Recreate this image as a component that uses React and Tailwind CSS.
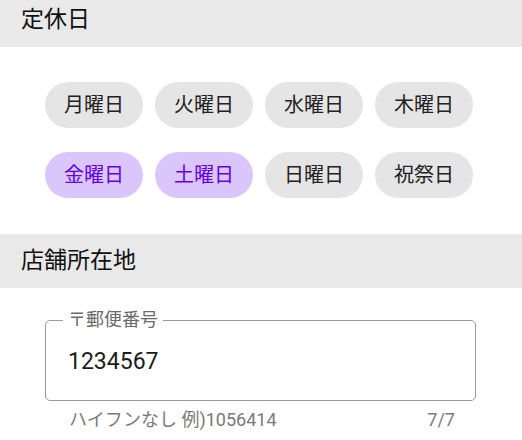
import React from "react";

const days = [
  { t: "月曜日", on: false },
  { t: "火曜日", on: false },
  { t: "水曜日", on: false },
  { t: "木曜日", on: false },
  { t: "金曜日", on: true },
  { t: "土曜日", on: true },
  { t: "日曜日", on: false },
  { t: "祝祭日", on: false },
];

export default function App() {
  return (
    <div
      className="w-[522px] h-[440px] overflow-hidden bg-white"
      style={{ fontFamily: "Roboto, 'Noto Sans CJK JP', sans-serif" }}
    >
      <div className="-mt-[7px] h-[54px] bg-[#e9e9e9] flex items-center pl-[21px] text-[23px] text-[#111]">
        定休日
      </div>
      <div className="pt-[35px] pb-[36px] pl-[45px]">
        <div className="grid grid-cols-[repeat(4,98px)] gap-x-[12px] gap-y-[24px]">
          {days.map((d) => (
            <div
              key={d.t}
              className={
                d.on
                  ? "h-[46px] rounded-full bg-[#dbc6fb] text-[#6200ee] flex items-center justify-center text-[20px]"
                  : "h-[46px] rounded-full bg-[#e5e5e5] text-[#222] flex items-center justify-center text-[20px]"
              }
            >
              {d.t}
            </div>
          ))}
        </div>
      </div>
      <div className="h-[54px] bg-[#e9e9e9] flex items-center pl-[21px] text-[23px] text-[#111]">
        店舗所在地
      </div>
      <div className="pt-[32px] pl-[45px] w-[476px]">
        <div className="relative h-[81px] rounded-[5px] border border-[#9a9a9a] flex items-center pt-[4px] pl-[22px] text-[23px] text-[#1c1c1c]">
          <span className="absolute -top-[12px] left-[17px] bg-white px-[5px] text-[18px] leading-[22px] text-[#6b6b6b]">
            〒郵便番号
          </span>
          1234567
        </div>
        <div className="flex justify-between pl-[24px] pr-[21px] pt-[8px] text-[18px] leading-[22px] text-[#7a7a7a]">
          <span>ハイフンなし 例)1056414</span>
          <span>7/7</span>
        </div>
      </div>
    </div>
  );
}
